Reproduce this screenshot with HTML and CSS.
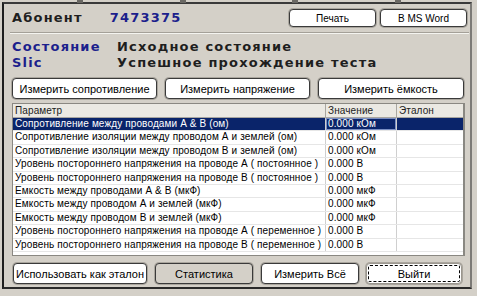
FILE: index.html
```html
<!DOCTYPE html>
<html>
  <head>
    <title>Тест линии</title>
    <link rel="stylesheet" href="styles.css">
  </head>
  <body>
    <div class="ticks"><span></span><span></span><span></span><span></span></div>
    <div class="window">
      <div class="top-row">
        <span class="caption">Абонент</span>
        <span class="caption blue number">7473375</span>
        <div class="top-buttons">
          <button type="button" class="btn btn-small">Печать</button>
          <button type="button" class="btn btn-small">В MS Word</button>
        </div>
      </div>
      <div class="separator"></div>
      <div class="status">
        <span class="caption blue">Состояние</span><span class="caption">Исходное состояние</span>
        <span class="caption blue">Slic</span><span class="caption">Успешное прохождение теста</span>
      </div>
      <div class="measure-row">
        <button type="button" class="btn">Измерить сопротивление</button>
        <button type="button" class="btn">Измерить напряжение</button>
        <button type="button" class="btn">Измерить ёмкость</button>
      </div>
      <div class="grid">
        <div class="grid-row grid-head"><div>Параметр</div><div>Значение</div><div>Эталон</div></div>
        <div class="grid-row selected"><div>Сопротивление между проводами А &amp; В (ом)</div><div class="focus">0.000 кОм</div><div></div></div>
        <div class="grid-row"><div>Сопротивление изоляции между проводом А и землей (ом)</div><div>0.000 кОм</div><div></div></div>
        <div class="grid-row"><div>Сопротивление изоляции между проводом В и землей (ом)</div><div>0.000 кОм</div><div></div></div>
        <div class="grid-row"><div>Уровень постороннего напряжения на проводе А ( постоянное )</div><div>0.000 В</div><div></div></div>
        <div class="grid-row"><div>Уровень постороннего напряжения на проводе В ( постоянное )</div><div>0.000 В</div><div></div></div>
        <div class="grid-row"><div>Емкость между проводами А &amp; В (мкФ)</div><div>0.000 мкФ</div><div></div></div>
        <div class="grid-row"><div>Емкость между проводом А и землей (мкФ)</div><div>0.000 мкФ</div><div></div></div>
        <div class="grid-row"><div>Емкость между проводом В и землей (мкФ)</div><div>0.000 мкФ</div><div></div></div>
        <div class="grid-row"><div>Уровень постороннего напряжения на проводе А ( переменное )</div><div>0.000 В</div><div></div></div>
        <div class="grid-row"><div>Уровень постороннего напряжения на проводе В ( переменное )</div><div>0.000 В</div><div></div></div>
      </div>
      <div class="bottom-row">
        <button type="button" class="btn b1">Использовать как эталон</button>
        <button type="button" class="btn b2 flat">Статистика</button>
        <button type="button" class="btn b3">Измерить Всё</button>
        <button type="button" class="btn b4 default">Выйти</button>
      </div>
    </div>
  </body>
</html>
```

FILE: styles.css
```css
html, body {
margin: 0;
padding: 0;
background: #d4d0c8;
}
body, div, span, button {
font-family: "Liberation Sans", Arial, sans-serif;
font-size: 11px;
color: #000;
}
.ticks {
display: flex;
height: 2px;
padding-left: 77px;
gap: 97px;
}
.ticks span {
width: 6px;
height: 3px;
background: #6a6864;
}
.ticks span:nth-child(3) {
margin-left: 9px;
}
.window {
width: 470px;
height: 287px;
box-sizing: border-box;
margin-left: 2px;
padding: 3px 5px 0 8px;
border-left: 2px solid #1e1e1e;
border-top: 2px solid #3a3a3a;
border-right: 2px solid #7c7a76;
border-bottom: 2px solid #2a2a2a;
background: #d4d0c8;
}
.caption {
font-family: "DejaVu Sans", Verdana, sans-serif;
font-size: 13px;
font-weight: bold;
letter-spacing: 1.2px;
line-height: 16px;
color: #1e1e1e;
}
.blue {
color: #1c1f8c;
}
.top-row {
display: flex;
align-items: center;
height: 22px;
margin-right: -2px;
}
.number {
margin-left: 27px;
}
.top-buttons {
display: flex;
gap: 4px;
margin-left: auto;
}
.btn {
height: 21px;
padding: 0;
border: 1px solid #3a3a3a;
border-radius: 4px;
background: #fff;
box-shadow: 0 0 0 1px #aaa69e;
font-size: 11px;
}
.btn-small {
width: 87px;
height: 18px;
font-size: 10px;
}
.separator {
margin-top: 3px;
margin-right: -4px;
margin-left: -2px;
border-top: 1px solid #a4a098;
border-bottom: 1px solid #f4f4f0;
}
.status {
display: grid;
grid-template-columns: 105px 1fr;
margin-top: 5px;
}
.measure-row {
display: grid;
grid-template-columns: 145px 145px 146px;
gap: 8px;
margin-top: 7px;
}
.grid {
height: 153px;
margin-top: 4px;
box-sizing: border-box;
border: 1px solid #8a8882;
border-right: 2px solid #8a8882;
background: #fff;
overflow: hidden;
}
.grid-row {
display: grid;
grid-template-columns: 313px 71px 1fr;
height: 13.4px;
box-sizing: border-box;
border-bottom: 1px solid #e6e6e6;
}
.grid-row div {
padding-left: 2px;
font-size: 10px;
letter-spacing: 0.12px;
line-height: 12.4px;
white-space: nowrap;
overflow: hidden;
border-right: 1px solid #cfcfcf;
}
.grid-row div:last-child {
border-right: none;
}
.grid-head {
height: 14px;
background: #ebe9e3;
border-bottom: 1px solid #a8a6a0;
}
.grid-head div {
line-height: 13px;
color: #222;
border-right: 1px solid #a8a6a0;
}
.selected {
background: #0a246a;
}
.selected div {
color: #fff;
}
.selected .focus {
box-shadow: inset 0 0 0 1px #7b8fc4;
}
.bottom-row {
display: flex;
margin-top: 7px;
padding-left: 1px;
}
.b1 {
width: 134px;
}
.b2 {
width: 98px;
margin-left: 8px;
}
.b3 {
width: 98px;
margin-left: 8px;
}
.b4 {
width: 96px;
margin-left: 7px;
}
.flat {
background: #d4d0c8;
}
.default {
border-color: #9a968e;
outline: 1px dashed #000;
outline-offset: -3px;
}
```
